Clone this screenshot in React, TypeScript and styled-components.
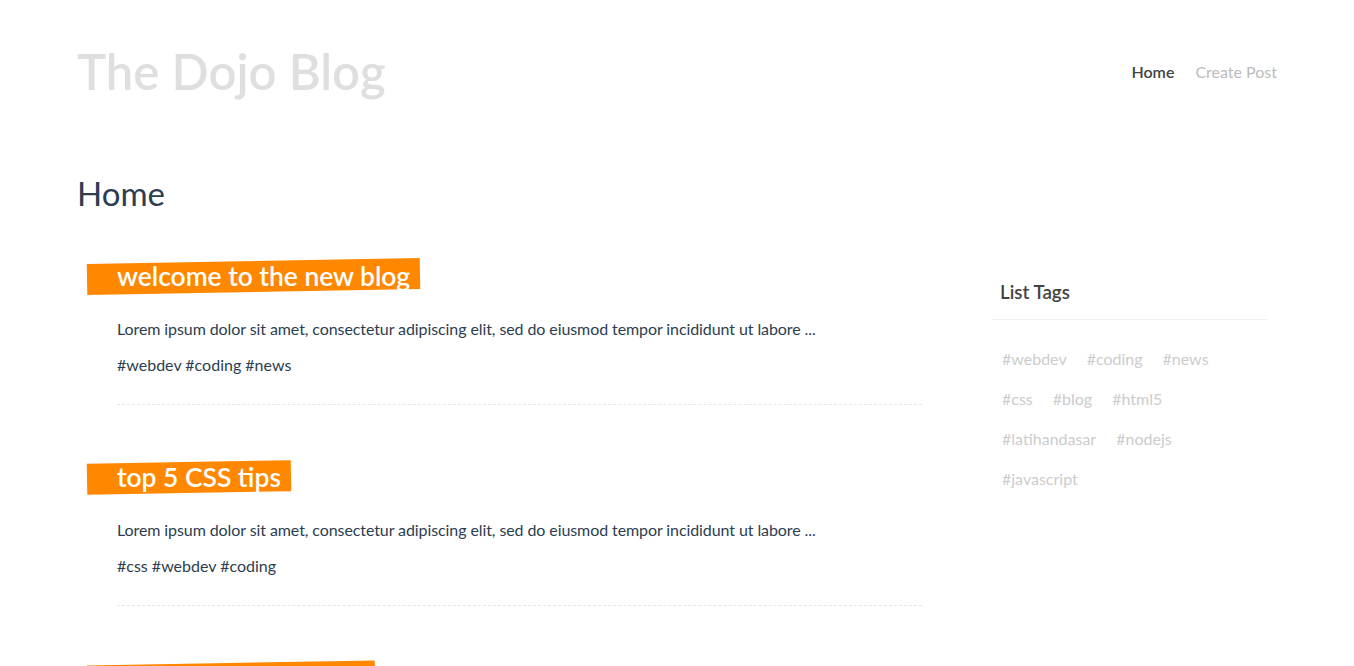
import styled, { createGlobalStyle } from "styled-components";

const GlobalStyle = createGlobalStyle`
  body {
    margin: 0;
    font-family: Lato, "Open Sans", sans-serif;
    color: #2c3e50;
    background: #fff;
  }
  h1, h2, h3, p, ul, li {
    margin: 0;
    padding: 0;
  }
`;

const Header = styled.header`
  max-width: 1200px;
  margin: 0 auto;
  padding-top: 42px;
  display: flex;
  justify-content: space-between;
  align-items: center;
`;

const Logo = styled.h1`
  font-size: 49px;
  font-weight: 600;
  color: #dfdfdf;
  line-height: 1.2;
`;

const Nav = styled.nav`
  display: flex;
  gap: 21px;
`;

const NavLink = styled.a<{ $active?: boolean }>`
  font-size: 16px;
  text-decoration: none;
  color: ${(p) => (p.$active ? "#444" : "#bbb")};
  font-weight: ${(p) => (p.$active ? 600 : 400)};
  cursor: pointer;
`;

const Page = styled.main`
  max-width: 1200px;
  margin: 0 auto;
  padding-top: 73px;
`;

const PageTitle = styled.h2`
  font-size: 33px;
  font-weight: 400;
  line-height: 1.2;
  color: #2c3e50;
`;

const Layout = styled.div`
  display: grid;
  grid-template-columns: 3fr 1fr;
  gap: 20px;
  margin-top: 21px;
`;

const PostList = styled.div``;

const Post = styled.article`
  margin: 0 40px 30px;
  padding-top: 27px;
  padding-bottom: 30px;
  border-bottom: 1px dashed #e7e7e7;
`;

const PostTitle = styled.h3`
  display: inline-block;
  position: relative;
  z-index: 0;
  font-size: 26.4px;
  font-weight: 600;
  line-height: 31px;
  color: #fff;
  vertical-align: top;

  &::before {
    content: "";
    position: absolute;
    top: 0;
    left: -30px;
    width: 100%;
    height: 100%;
    padding-right: 40px;
    background: #ff8800;
    transform: rotateZ(-1deg);
    z-index: -1;
  }
`;

const Snippet = styled.p`
  margin-top: 27px;
  font-size: 16px;
  line-height: 19px;
  letter-spacing: -0.09px;
`;

const PostTags = styled.p`
  margin-top: 17px;
  font-size: 16px;
  line-height: 19px;
`;

const TagCloud = styled.aside`
  padding: 10px;
`;

const TagCloudTitle = styled.h3`
  margin-top: 21px;
  font-size: 18.72px;
  font-weight: 600;
  line-height: 1.2;
  color: #444;
  padding: 16px 8px 15px;
  border-bottom: 1px solid #eee;
`;

const TagList = styled.div`
  margin-top: 19px;
  line-height: 20px;
`;

const Tag = styled.a`
  display: inline-block;
  padding: 10px;
  font-size: 16px;
  color: #ccc;
  text-decoration: none;
  vertical-align: top;
`;

const snippet =
  "Lorem ipsum dolor sit amet, consectetur adipiscing elit, sed do eiusmod tempor incididunt ut labore ...";

const posts = [
  { id: 1, title: "welcome to the new blog", tags: ["webdev", "coding", "news"] },
  { id: 2, title: "top 5 CSS tips", tags: ["css", "webdev", "coding"] },
  { id: 3, title: "why Vue 3 is amazing", tags: ["javascript", "vue"] },
];

const tags = ["webdev", "coding", "news", "css", "blog", "html5", "latihandasar", "nodejs", "javascript"];

export default function App() {
  return (
    <>
      <GlobalStyle />
      <Header>
        <Logo>The Dojo Blog</Logo>
        <Nav>
          <NavLink $active>Home</NavLink>
          <NavLink>Create Post</NavLink>
        </Nav>
      </Header>
      <Page>
        <PageTitle>Home</PageTitle>
        <Layout>
          <PostList>
            {posts.map((post) => (
              <Post key={post.id}>
                <PostTitle>{post.title}</PostTitle>
                <Snippet>{snippet}</Snippet>
                <PostTags>{post.tags.map((t) => `#${t}`).join(" ")}</PostTags>
              </Post>
            ))}
          </PostList>
          <TagCloud>
            <TagCloudTitle>List Tags</TagCloudTitle>
            <TagList>
              {tags.map((t) => (
                <Tag key={t}>#{t}</Tag>
              ))}
            </TagList>
          </TagCloud>
        </Layout>
      </Page>
    </>
  );
}
